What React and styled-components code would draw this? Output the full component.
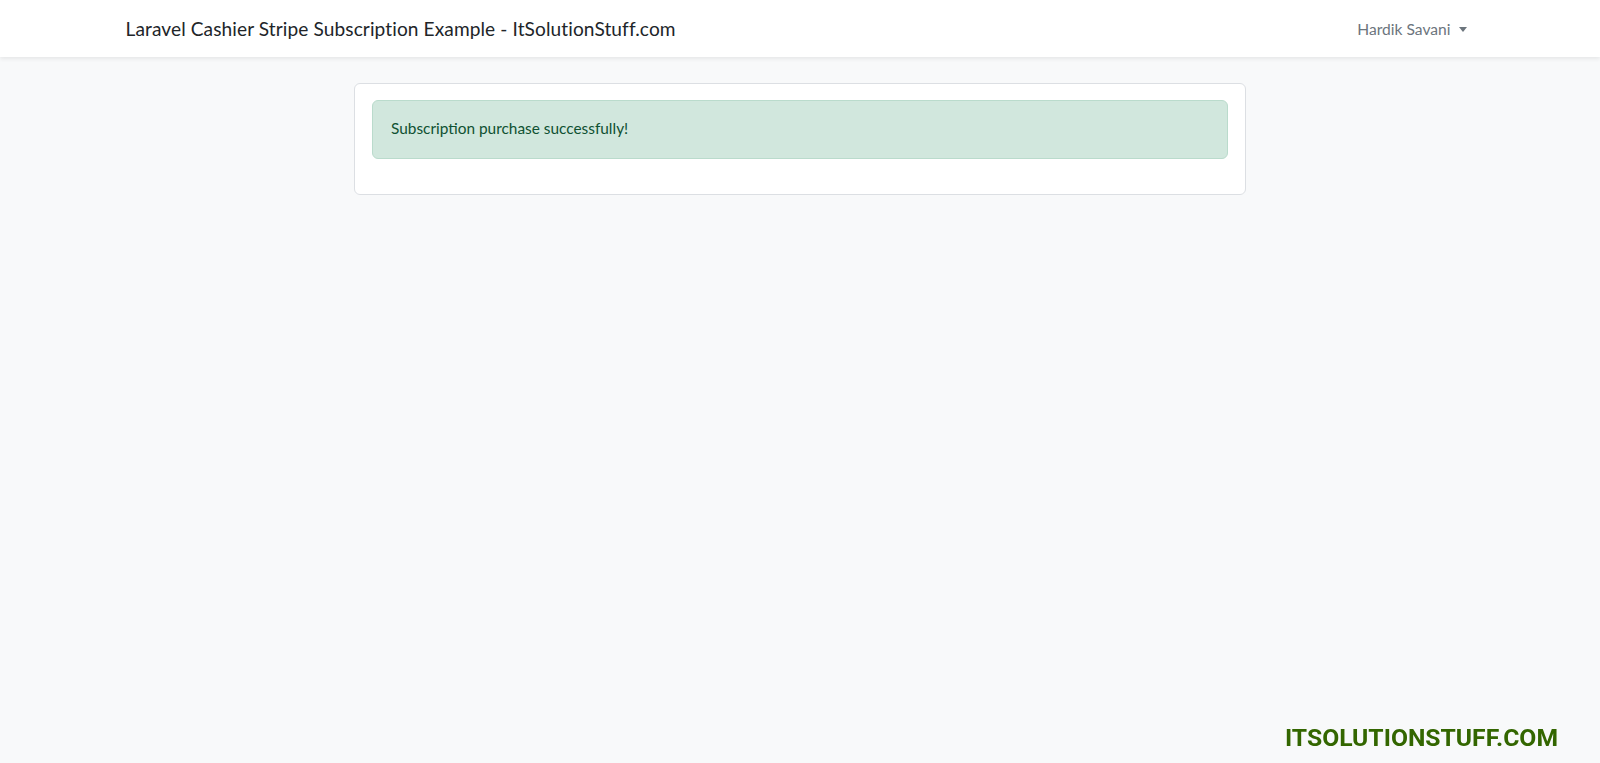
import React from "react";
import styled, { createGlobalStyle } from "styled-components";

const GlobalStyle = createGlobalStyle`
  *, *::before, *::after {
    box-sizing: border-box;
  }
  html, body {
    margin: 0;
    padding: 0;
    background: #f8f9fa;
    font-family: "Lato", "Noto Sans", sans-serif;
    overflow: hidden;
  }
`;

const Navbar = styled.nav`
  height: 57px;
  background: #fff;
  box-shadow: 0 0.125rem 0.25rem rgba(0, 0, 0, 0.075);
  display: flex;
  justify-content: center;
`;

const NavInner = styled.div`
  width: 1349px;
  display: flex;
  align-items: center;
  justify-content: space-between;
`;

const Brand = styled.a`
  font-size: 19.1px;
  color: #212529;
  text-decoration: none;
  letter-spacing: 0.1px;
`;

const Dropdown = styled.a`
  display: flex;
  align-items: center;
  gap: 8px;
  font-size: 15.6px;
  color: #6c757d;
  padding-right: 8px;
  text-decoration: none;

  &::after {
    content: "";
    border-top: 5px solid #6c757d;
    border-left: 4.6px solid transparent;
    border-right: 4.6px solid transparent;
    margin-top: 1px;
  }
`;

const Main = styled.main`
  display: flex;
  justify-content: center;
  padding-top: 26px;
`;

const Card = styled.div`
  width: 892px;
  background: #fff;
  border: 1px solid #dcdfe3;
  border-radius: 6px;
  padding: 17px;
  padding-top: 16px;
`;

const Alert = styled.div`
  background: #d1e7dd;
  border: 1px solid #badbcc;
  color: #0f5132;
  border-radius: 6px;
  padding: 0 18px 3px;
  height: 59px;
  display: flex;
  align-items: center;
  font-size: 15.4px;
  margin-bottom: 18px;
`;

const Watermark = styled.div`
  position: fixed;
  right: 42px;
  bottom: 11px;
  font-family: "Roboto", sans-serif;
  font-weight: 700;
  font-size: 24.7px;
  color: #336600;
`;

export default function App() {
  return (
    <>
      <GlobalStyle />
      <Navbar>
        <NavInner>
          <Brand href="#">Laravel Cashier Stripe Subscription Example - ItSolutionStuff.com</Brand>
          <Dropdown href="#">Hardik Savani</Dropdown>
        </NavInner>
      </Navbar>
      <Main>
        <Card>
          <Alert>Subscription purchase successfully!</Alert>
        </Card>
      </Main>
      <Watermark>ITSOLUTIONSTUFF.COM</Watermark>
    </>
  );
}
